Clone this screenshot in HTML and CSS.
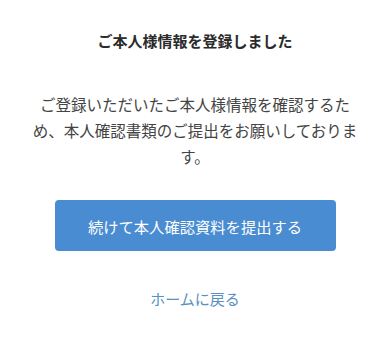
FILE: index.html
```html
<!DOCTYPE html>
<html lang="ja">
<head>
    <meta charset="UTF-8">
    <meta name="viewport" content="width=device-width, initial-scale=1.0">
    <title>ご本人様情報を登録しました</title>
    <link rel="stylesheet" href="styles.css">
</head>
<body>

<div class="container">
    <h2 class="title">ご本人様情報を登録しました</h2>
    <p class="message">ご登録いただいたご本人様情報を確認するため、本人確認書類のご提出をお願いしております。</p>
    <a class="btn" href="#">続けて本人確認資料を提出する</a>
    <a class="link" href="#">ホームに戻る</a>
</div>

</body>
</html>
```

FILE: styles.css
```css
body {
    font-family: "Noto Sans CJK JP", sans-serif;
    margin: 0;
    background: #fff;
    color: #333;
}
.container {
    width: 390px;
    padding-top: 29px;
    display: flex;
    flex-direction: column;
    align-items: center;
}
.title {
    font-size: 15px;
    font-weight: bold;
    margin: 0;
    line-height: 24px;
    color: #2b2b2b;
}
.message {
    width: 328px;
    margin: 38px 0 0;
    font-size: 15.5px;
    line-height: 26px;
    text-align: center;
    color: #444;
}
.btn {
    display: flex;
    align-items: center;
    justify-content: center;
    width: 281px;
    height: 51px;
    margin-top: 31px;
    background: #4a8cd1;
    border-radius: 4px;
    color: #fff;
    font-size: 15.3px;
    text-decoration: none;
}
.link {
    margin-top: 37px;
    font-size: 15px;
    color: #5a8fc2;
    text-decoration: none;
}
```
